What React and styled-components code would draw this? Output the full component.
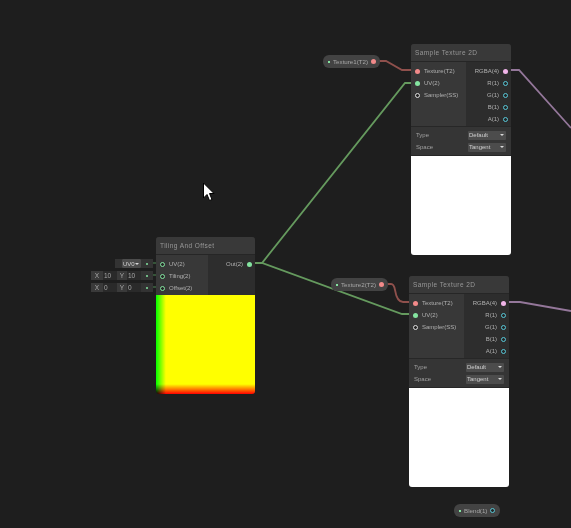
import React from "react";
import styled, { createGlobalStyle } from "styled-components";

const GlobalStyle = createGlobalStyle`
    html, body {
        margin:0;
        padding:0;
        background-color:#1e1e1e;
    }
`

const Canvas = styled.div`
    position:relative;
    width:571px;
    height:528px;
    overflow:hidden;
    background-color:#1e1e1e;
    font-family:"Liberation Sans", Arial, sans-serif;
    font-size:6px;
    color:#a0a0a0;
    filter:blur(0.25px);
`

const Wires = styled.svg`
    position:absolute;
    left:0;
    top:0;
`

const Node = styled.div`
    position:absolute;
    left:${(p) => p.$x}px;
    top:${(p) => p.$y}px;
    width:${(p) => p.$w}px;
    display:flex;
    flex-direction:column;
    border-radius:3px;
    overflow:hidden;
    background-color:#2f2f2f;
`

const NodeTitle = styled.div`
    height:18px;
    line-height:18px;
    padding-left:4px;
    background-color:#393939;
    border-bottom:1px solid #262626;
    box-sizing:border-box;
    font-size:6.5px;
    letter-spacing:0.42px;
    font-weight:400;
    color:#989898;
`

const PortArea = styled.div`
    display:flex;
    height:${(p) => p.$h}px;
`

const InColumn = styled.div`
    width:${(p) => p.$w}px;
    padding-top:3px;
    box-sizing:border-box;
    background-color:#383838;
`

const OutColumn = styled.div`
    flex:1;
    padding-top:3px;
    box-sizing:border-box;
    background-color:#2d2d2d;
`

const PortRow = styled.div`
    display:flex;
    align-items:center;
    justify-content:${(p) => (p.$out ? "flex-end" : "flex-start")};
    gap:4px;
    height:12px;
    padding:${(p) => (p.$out ? "0 3px 0 0" : "0 0 0 4px")};
    color:#b0b0b0;
`

const Dot = styled.span`
    display:block;
    flex:none;
    box-sizing:border-box;
    width:5px;
    height:5px;
    border-radius:50%;
    background-color:${(p) => (p.$hollow ? "#262626" : p.$color)};
    border:${(p) => (p.$hollow ? "1.2px" : "0")} solid ${(p) => p.$color};
`

const Controls = styled.div`
    display:flex;
    flex-direction:column;
    justify-content:center;
    gap:3px;
    height:30px;
    padding:0 5px;
    box-sizing:border-box;
    background-color:#353535;
    border-top:1px solid #272727;
    border-bottom:1px solid #272727;
`

const ControlRow = styled.div`
    display:flex;
    align-items:center;
    justify-content:space-between;
    height:9px;
    color:#a0a0a0;
`

const Select = styled.div`
    display:flex;
    align-items:center;
    justify-content:space-between;
    width:${(p) => p.$w}px;
    height:9px;
    padding:0 2px 0 1px;
    box-sizing:border-box;
    background-color:#4c4c4c;
    border-radius:1px;
    color:#d0d0d0;
    font-size:6px;
`

const Caret = styled.span`
    flex:none;
    width:0;
    height:0;
    border-left:2px solid transparent;
    border-right:2px solid transparent;
    border-top:2px solid #d8d8d8;
`

const Preview = styled.div`
    height:99px;
    background-color:#ffffff;
`

const UvPreview = styled.div`
    height:99px;
    background-image:
        linear-gradient(to right, #000000, #ff0000 10%, #ff0000),
        linear-gradient(to top, #000000, #00ff00 10%, #00ff00);
    background-blend-mode:screen;
`

const Pill = styled.div`
    position:absolute;
    left:${(p) => p.$x}px;
    top:${(p) => p.$y}px;
    width:${(p) => p.$w}px;
    height:13px;
    display:flex;
    align-items:center;
    gap:3px;
    padding:0 6px 0 5px;
    box-sizing:border-box;
    border-radius:6px;
    background-color:#434343;
    color:#a8a8a8;
    font-size:6.2px;
`

const PillMark = styled.span`
    width:2px;
    height:2px;
    flex:none;
    background-color:${(p) => p.$color};
`

const PillLabel = styled.span`
    flex:1;
    white-space:nowrap;
`

const InlineInputs = styled.div`
    position:absolute;
    left:91px;
    top:259px;
    width:62px;
    display:flex;
    flex-direction:column;
    gap:3px;
`

const InlineRow = styled.div`
    display:flex;
    justify-content:flex-end;
    height:9px;
`

const InlineField = styled.div`
    display:flex;
    align-items:center;
    width:${(p) => p.$w}px;
    height:9px;
    padding-left:${(p) => (p.$label ? 0 : 1)}px;
    justify-content:${(p) => (p.$label ? "center" : "flex-start")};
    box-sizing:border-box;
    background-color:${(p) => p.$bg};
    color:#a8a8a8;
    font-size:6.5px;
`

const PortCap = styled.div`
    display:flex;
    align-items:center;
    justify-content:center;
    width:12px;
    height:9px;
    background-color:#333333;
`

const CapDot = styled.span`
    width:2px;
    height:2px;
    border-radius:50%;
    background-color:#84e4a0;
`

const Cursor = styled.svg`
    position:absolute;
    left:202px;
    top:182px;
`

const GREEN = "#84e4a0";
const RED = "#f28a8a";
const PINK = "#f0b4e8";
const CYAN = "#58c8d8";

function SampleNode({ x, y }) {
    return (
        <Node $x={x} $y={y} $w={100}>
            <NodeTitle>Sample Texture 2D</NodeTitle>
            <PortArea $h={64}>
                <InColumn $w={55}>
                    <PortRow><Dot $color={RED} />Texture(T2)</PortRow>
                    <PortRow><Dot $color={GREEN} />UV(2)</PortRow>
                    <PortRow><Dot $color="#e0e0e0" $hollow />Sampler(SS)</PortRow>
                </InColumn>
                <OutColumn>
                    <PortRow $out>RGBA(4)<Dot $color={PINK} /></PortRow>
                    <PortRow $out>R(1)<Dot $color={CYAN} $hollow /></PortRow>
                    <PortRow $out>G(1)<Dot $color={CYAN} $hollow /></PortRow>
                    <PortRow $out>B(1)<Dot $color={CYAN} $hollow /></PortRow>
                    <PortRow $out>A(1)<Dot $color={CYAN} $hollow /></PortRow>
                </OutColumn>
            </PortArea>
            <Controls>
                <ControlRow>Type<Select $w={38}>Default<Caret /></Select></ControlRow>
                <ControlRow>Space<Select $w={38}>Tangent<Caret /></Select></ControlRow>
            </Controls>
            <Preview />
        </Node>
    );
}

function App() {
    return (
        <Canvas>
            <GlobalStyle />

            <Wires width="571" height="528" fill="none" strokeWidth="1.8">
                <path d="M250 263 H262 L405 83 H417" stroke="#659a5e" />
                <path d="M250 263 H262 L402 314 H415" stroke="#659a5e" />
                <path d="M150 263 H160 M150 275 H160 M150 287 H160" stroke="#4f8a55" strokeWidth="1" />
                <path d="M371 61 H386 L402 70 H417" stroke="#8f504c" />
                <path d="M379 284 H391 Q394 284 395 290 Q397 302 403 302 H415" stroke="#8f504c" />
                <path d="M505 70 H519 L571 128" stroke="#94779a" />
                <path d="M503 302 H520 L571 311" stroke="#94779a" />
            </Wires>

            <InlineInputs>
                <InlineRow>
                    <InlineField $w={7} $bg="#333333" />
                    <Select $w={19}>UV0<Caret /></Select>
                    <PortCap><CapDot /></PortCap>
                </InlineRow>
                <InlineRow>
                    <InlineField $w={12} $label $bg="#3a3a3a">X</InlineField>
                    <InlineField $w={14} $bg="#2a2a2a">10</InlineField>
                    <InlineField $w={10} $label $bg="#3a3a3a">Y</InlineField>
                    <InlineField $w={14} $bg="#2a2a2a">10</InlineField>
                    <PortCap><CapDot /></PortCap>
                </InlineRow>
                <InlineRow>
                    <InlineField $w={12} $label $bg="#3a3a3a">X</InlineField>
                    <InlineField $w={14} $bg="#2a2a2a">0</InlineField>
                    <InlineField $w={10} $label $bg="#3a3a3a">Y</InlineField>
                    <InlineField $w={14} $bg="#2a2a2a">0</InlineField>
                    <PortCap><CapDot /></PortCap>
                </InlineRow>
            </InlineInputs>

            <Node $x={156} $y={237} $w={99}>
                <NodeTitle>Tiling And Offset</NodeTitle>
                <PortArea $h={40}>
                    <InColumn $w={52}>
                        <PortRow><Dot $color={GREEN} $hollow />UV(2)</PortRow>
                        <PortRow><Dot $color={GREEN} $hollow />Tiling(2)</PortRow>
                        <PortRow><Dot $color={GREEN} $hollow />Offset(2)</PortRow>
                    </InColumn>
                    <OutColumn>
                        <PortRow $out>Out(2)<Dot $color={GREEN} /></PortRow>
                    </OutColumn>
                </PortArea>
                <UvPreview />
            </Node>

            <SampleNode x={411} y={44} />
            <SampleNode x={409} y={276} />

            <Pill $x={323} $y={55} $w={57}>
                <PillMark $color={GREEN} />
                <PillLabel>Texture1(T2)</PillLabel>
                <Dot $color={RED} />
            </Pill>
            <Pill $x={331} $y={278} $w={57}>
                <PillMark $color={GREEN} />
                <PillLabel>Texture2(T2)</PillLabel>
                <Dot $color={RED} />
            </Pill>
            <Pill $x={454} $y={504} $w={46}>
                <PillMark $color={GREEN} />
                <PillLabel>Blend(1)</PillLabel>
                <Dot $color={CYAN} $hollow />
            </Pill>

            <Cursor width="14" height="20" viewBox="0 0 14 20">
                <path d="M1.5 1 V16 L5 12.5 L7.5 18.5 L10 17.5 L7.5 11.5 H12 Z" fill="#ffffff" stroke="#000000" strokeWidth="1" />
            </Cursor>
        </Canvas>
    );
}

export default App;
